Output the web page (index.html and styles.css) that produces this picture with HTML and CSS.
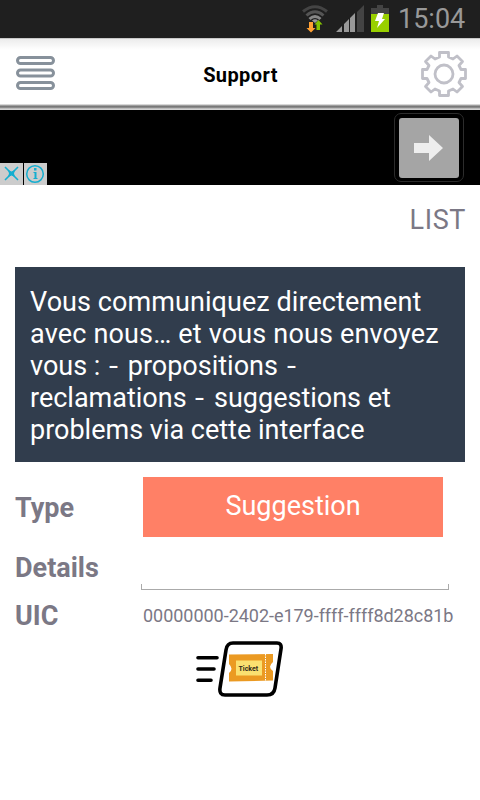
FILE: index.html
```
<!DOCTYPE html>
<html lang="fr">
<head>
    <meta charset="UTF-8">
    <title>Support</title>
    <link rel="stylesheet" href="styles.css">
</head>
<body>
<div class="status">
    <svg class="wifi" width="28" height="29" viewBox="0 0 28 29">
        <g fill="none" stroke-width="3">
            <path d="M2 6.500Q14 -3 26 6.500" stroke="#444"/>
            <path d="M5.500 10.500Q14 3 22.500 10.500" stroke="#555"/>
            <path d="M8.500 14Q14 9 19.500 14" stroke="#888"/>
        </g>
        <path d="M11 15.500Q14 13 17 15.500L14 18z" fill="#999"/>
        <path d="M8 17h4v6h2.500L10 27.500 5.500 23H8z" fill="#ffa033"/>
        <path d="M15.500 25h3.500v-5.500h2.500L17.500 15l-4 4.500h2z" fill="#84c400"/>
    </svg>
    <svg class="signal" width="28" height="27" viewBox="0 0 28 27">
        <path d="M0 27L6 21v6zM8 27v-8l5-5v13zM14 27V13l5-5v19z" fill="#999"/>
        <path d="M21 27V7l7-7v27z" fill="#444"/>
    </svg>
    <svg class="battery" width="18" height="27" viewBox="0 0 18 27">
        <path d="M0 3h6V0h6v3h6v6H0z" fill="#444"/>
        <path d="M0 9h18v18H0z" fill="#99d000"/>
        <path d="M7 8h6l-2 6h3L6 23l2-7H4z" fill="#fff"/>
    </svg>
    <span class="time">15:04</span>
</div>
<div class="header">
    <svg class="menu" width="39" height="35" viewBox="0 0 39 35">
        <g fill="#fff" stroke="#87919b" stroke-width="3">
            <rect x="1.500" y="1.500" width="36" height="6" rx="3"/>
            <rect x="1.500" y="14" width="36" height="6" rx="3"/>
            <rect x="1.500" y="26.500" width="36" height="6" rx="3"/>
        </g>
    </svg>
    <h1 class="title">Support</h1>
    <svg class="gear" width="46" height="46" viewBox="0 0 46 46">
        <g fill="none" stroke="#c0c0c8" stroke-width="2.800" stroke-linejoin="round">
            <path d="M18.500 1.500h9v4.500l4.500 2 4-3 5.500 5.500-3.500 4 2 4h4.500v9H40l-2 4 3.500 4-5.500 5.500-4-3-4.500 2v4.500h-9V40L14 38l-4 3-5.500-5.500 3.500-4-2-4H1.500v-9H6l2-4-3.500-4L10 5l4 3 4.500-2z"/>
            <circle cx="23" cy="23" r="9"/>
        </g>
    </svg>
</div>
<div class="banner">
    <div class="choices">
        <svg class="choice" width="23" height="22" viewBox="0 0 23 22">
            <path d="M5 4l13 13M18 4L5 17" fill="none" stroke="#13aed0" stroke-width="1.600"/>
            <path d="M8 7l3.500 1.500L15 7l-1 3.500 1 3.500-3.500-1.500L8 14l1-3.500z" fill="#13aed0"/>
        </svg>
        <svg class="choice" width="23" height="22" viewBox="0 0 23 22">
            <circle cx="11" cy="11" r="8.300" fill="none" stroke="#13aed0" stroke-width="1.500"/>
            <path d="M10 5h2.500v2.500H10zM9.500 9h3v6h1v1h-4v-1h1v-5h-1z" fill="#13aed0"/>
        </svg>
    </div>
    <div class="frame">
        <div class="next">
            <svg width="30" height="26" viewBox="0 0 30 26">
                <path d="M0 8h15V0l14 13-14 13v-8H0z" fill="#eee"/>
            </svg>
        </div>
    </div>
</div>
<div class="content">
    <div class="list">LIST</div>
    <p class="notice"><span class="line1">Vous communiquez directement</span><br><span class="line2">avec nous… et vous nous envoyez</span><br>vous : <span class="dash">-</span> propositions <span class="dash">-</span><br>reclamations <span class="dash">-</span> suggestions et<br>problems via cette interface</p>
    <div class="form">
        <label class="label">Type</label>
        <div class="select">Suggestion</div>
        <label class="label">Details</label>
        <div class="field"></div>
        <label class="label">UIC</label>
        <div class="code">00000000-2402-e179-ffff-ffff8d28c81b</div>
    </div>
    <svg class="ticket" width="88" height="56" viewBox="0 0 88 56">
        <g fill="none" stroke="#000" stroke-width="3.600" stroke-linecap="round" stroke-linejoin="round">
            <path d="M2 16.800h19M2 28h16M2 39.200h13"/>
            <path d="M37 2H81Q86 2 85 8L79 47Q78 54 71 54H29Q23 54 24 47L30 9Q31 2 37 2z"/>
        </g>
        <path d="M33 13.500L77 13v8q-6 5 0 9v9.500L33 40.500V32q5-4 0-9z" fill="#eb9a22"/>
        <path d="M40 19.500h26v15H40z" fill="#fae070"/>
        <path d="M69.500 13v27" stroke="#fff" stroke-width="1" stroke-dasharray="1.500 1"/>
        <text class="ticket-text" x="42.500" y="30">Ticket</text>
    </svg>
</div>
</body>
</html>
```
FILE: styles.css
```
*{
    margin: 0;
    padding: 0;
    box-sizing: border-box;
}
body{
    width: 480px;
    height: 800px;
    overflow: hidden;
    background: #fff;
    font-family: Roboto, sans-serif;
    color: #7b7885;
}
svg{
    display: block;
    flex: none;
}
.status{
    height: 38px;
    background: #1f1f1f;
    display: flex;
    justify-content: flex-end;
    align-items: flex-start;
    padding: 5px 16px 0 0;
}
.signal{
    margin-left: 7px;
}
.battery{
    margin-left: 7px;
}
.time{
    width: 66px;
    margin-left: 9px;
    font-size: 27px;
    line-height: 28px;
    color: #999;
    white-space: nowrap;
}
.header{
    height: 72px;
    display: flex;
    justify-content: space-between;
    align-items: flex-start;
    padding: 13px 13px 0 16px;
    background: linear-gradient(#a5a5a5 0, #ececec 1px, #fff 12px, #fff 66px, #b0b0b0 67px, #666 69px, #b0b0b0 70px, #ddd 72px);
}
.menu{
    margin-top: 5px;
}
.title{
    font-size: 20px;
    line-height: 24px;
    letter-spacing: 0.4px;
    margin: 12px 0 0 5px;
    color: #000;
}
.banner{
    height: 75px;
    background: #000;
    display: flex;
    justify-content: space-between;
    align-items: flex-end;
    padding-right: 16px;
}
.choices{
    display: flex;
    gap: 1px;
}
.choice{
    background: #ccc;
}
.frame{
    width: 70px;
    height: 69px;
    margin-bottom: 3px;
    padding: 5px;
    border: 1px solid #2c2c2c;
    border-radius: 7px;
}
.next{
    width: 60px;
    height: 60px;
    margin-left: -1px;
    margin-top: -1px;
    border-radius: 3px;
    background: #a5a5a5;
    display: flex;
    align-items: center;
    justify-content: center;
}
.content{
    padding: 15px 15px 0;
}
.list{
    font-size: 27px;
    line-height: 40px;
    letter-spacing: 0.6px;
    margin-right: -1px;
    text-align: right;
}
.notice{
    height: 195px;
    margin-top: 27px;
    padding: 19px 15px 0;
    background: #313d4d;
    color: #fff;
    font-size: 27px;
    line-height: 32px;
    white-space: nowrap;
}
.line1{
    letter-spacing: 0.07px;
}
.line2{
    letter-spacing: 0.17px;
}
.dash{
    display: inline-block;
    width: 12px;
    margin-left: 2px;
    transform: scaleX(1.2);
    transform-origin: left;
}
.form{
    display: grid;
    grid-template-columns: 128px 1fr;
    grid-template-rows: 60px 60px 36px;
    margin-top: 15px;
    align-items: center;
}
.label{
    font-size: 27px;
    line-height: 32px;
    padding-top: 2px;
    font-weight: bold;
}
.select{
    width: 300px;
    height: 60px;
    background: #ff8066;
    color: #fff;
    font-size: 27px;
    line-height: 58px;
    text-align: center;
}
.field{
    width: 308px;
    height: 6px;
    margin: 39px 0 0 -2px;
    border: 1px solid #aaa;
    border-top: 0;
}
.code{
    font-size: 18px;
    line-height: 24px;
    padding-top: 2px;
    letter-spacing: -0.03px;
    white-space: nowrap;
}
.ticket{
    margin: 8px 0 0 181px;
}
.ticket-text{
    font: bold 7px Roboto, sans-serif;
    fill: #332b18;
}
```
